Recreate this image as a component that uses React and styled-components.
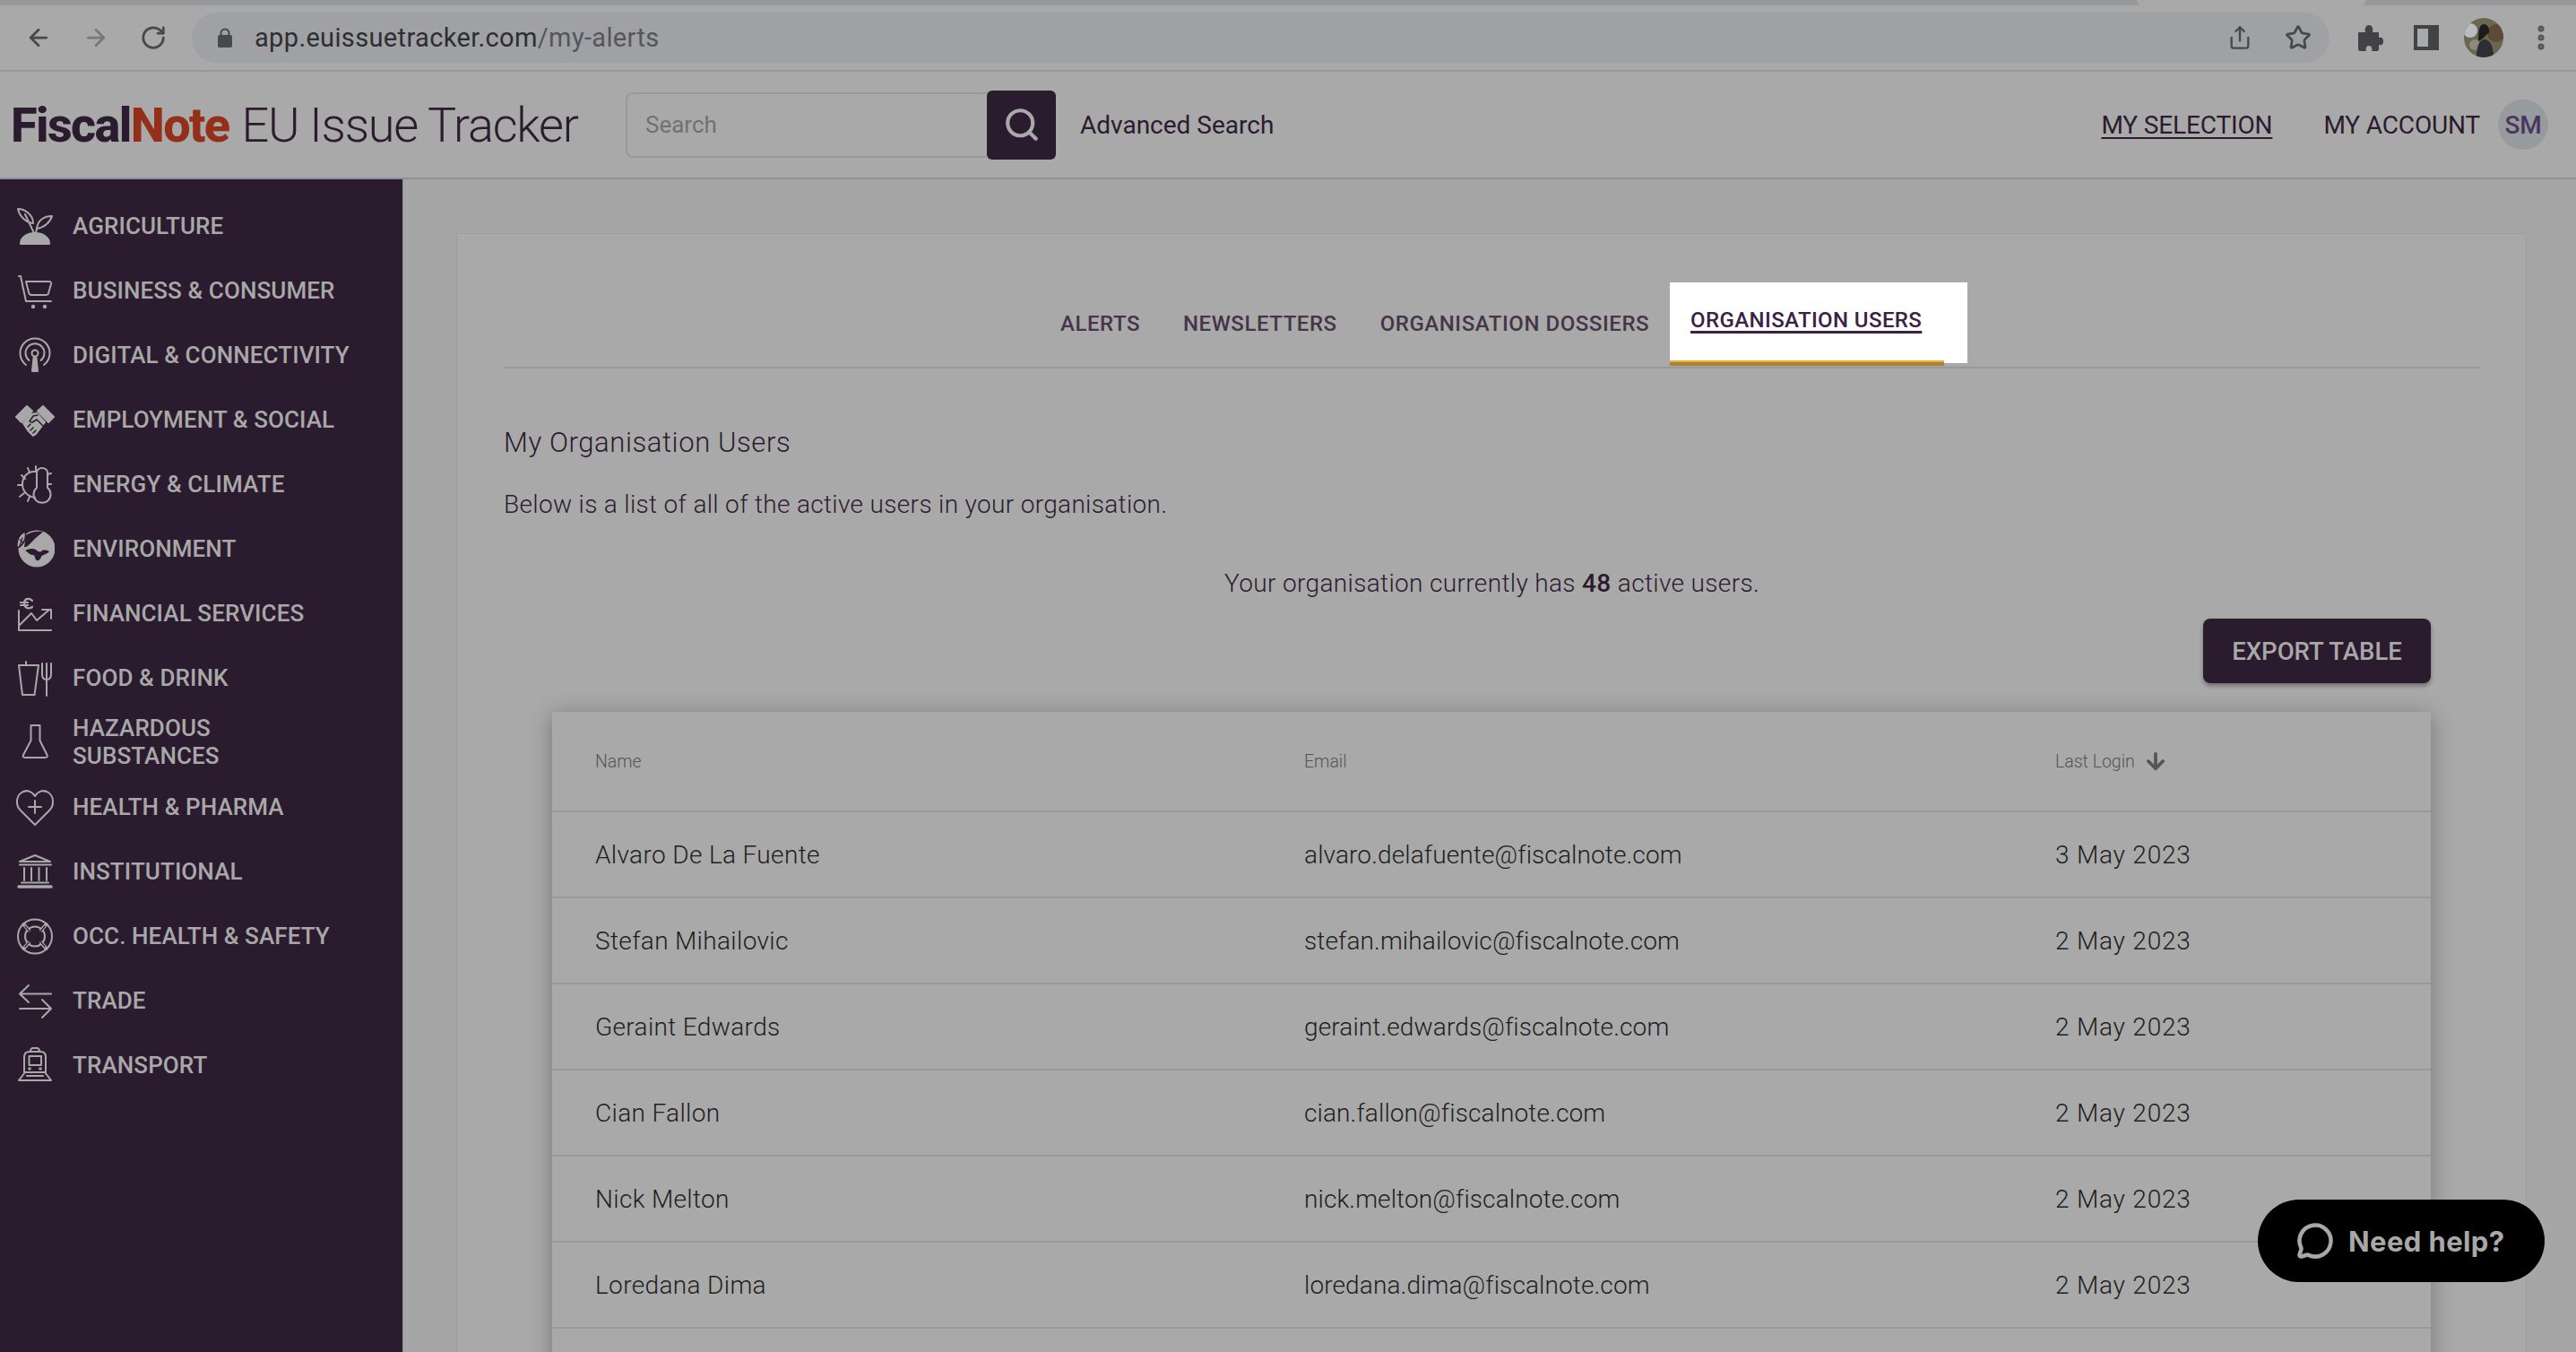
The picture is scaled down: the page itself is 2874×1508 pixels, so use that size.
import React from "react";
import styled, { createGlobalStyle } from "styled-components";
import { Search, Share, Star, ArrowDown, ArrowLeft, ArrowRight, RotateCw, EllipsisVertical, MessageCircle } from "lucide-react";

const Global = createGlobalStyle`
  html, body { margin: 0; padding: 0; height: 100%; overflow: hidden; background: #a9a9a9; }
  body { font-family: Roboto, "Liberation Sans", sans-serif; }
  #root { height: 100%; }
  * { box-sizing: border-box; }
`;

const Page = styled.div`
  height: 1508px; width: 2874px; display: flex; flex-direction: column; overflow: hidden; position: relative;
`;

const Chrome = styled.div`
  height: 80px; flex: none; background: #a9a9a9; border-bottom: 2px solid #9a9a9a; position: relative;
  padding: 6px 0 0 0; display: flex; align-items: center;
`;
const TabStrip = styled.div`
  height: 6px; position: absolute; top: 0; left: 0; right: 0; background: #98999d;
`;
const ChromeTab = styled.div`
  position: absolute; top: 0; left: 2384px; width: 255px; height: 6px; background: #a9a9a9; border-radius: 0 0 8px 8px;
`;
const NavIcons = styled.div`
  display: flex; align-items: center; gap: 34px; padding-left: 28px; width: 214px; flex: none; color: #47484b;
`;
const NavIcon = styled.span`
  display: flex; color: ${p => p.$dim ? "#77787a" : "#47484b"};
`;
const UrlPill = styled.div`
  width: 2385px; height: 56px; border-radius: 28px; background: #a0a1a4; display: flex; align-items: center; padding-left: 28px; flex: none;
`;
const LockGlyph = styled.svg`
  width: 18px; height: 22px; margin-right: 24px; flex: none; display: block;
`;
const UrlText = styled.span`
  font-size: 29px; color: #2d2e30; white-space: nowrap; letter-spacing: 0.35px;
  & > i { font-style: normal; color: #55565a; }
`;
const PillEnd = styled.div`
  margin-left: auto; display: flex; align-items: center; gap: 36px; padding-right: 20px; color: #47484b;
`;
const ChromeRight = styled.div`
  display: flex; align-items: center; margin-left: 30px; color: #414245;
`;
const PuzzleGlyph = styled.svg`
  width: 30px; height: 30px; display: block; fill: #414245;
`;
const SidePanelIcon = styled.span`
  width: 28px; height: 28px; margin-left: 34px; border: 4px solid #414245; border-right-width: 12px; display: block; background: #a9a9a9;
`;
const Avatar = styled.svg`
  width: 44px; height: 44px; margin-left: 28px; border-radius: 50%; display: block;
`;
const Dots = styled.span`
  display: flex; margin-left: 25px; color: #55565a;
`;

const Header = styled.header`
  height: 120px; flex: none; background: #a9a9a9; border-bottom: 2px solid #8f8f9a; display: flex; align-items: center;
  padding: 0 31px 0 12px; color: #2b1b2e;
`;
const Logo = styled.div`
  display: flex; align-items: baseline; width: 686px; flex: none; font-size: 54px; white-space: nowrap;
`;
const LogoBold = styled.span`
  font-weight: 800; letter-spacing: -1.6px; color: ${p => p.$red ? "#94301a" : "#2b1b2e"};
`;
const LogoLight = styled.span`
  font-weight: 300; margin-left: 14px; letter-spacing: -1.2px; color: #2b1b2e;
`;
const SearchBox = styled.div`
  width: 403px; height: 73px; border: 2px solid #999; border-radius: 8px 0 0 8px; border-right: none; padding-left: 20px; display: flex; align-items: center;
  font-size: 26px; color: #717171; flex: none;
`;
const SearchButton = styled.button`
  width: 77px; height: 77px; flex: none; background: #2b1b2e; border: none; border-radius: 6px; color: #a9a9a9; display: flex; align-items: center; justify-content: center; padding: 0;
`;
const AdvLink = styled.span`
  font-size: 28px; margin-left: 27px;
`;
const HeaderRight = styled.div`
  margin-left: auto; display: flex; align-items: center; font-size: 28px; letter-spacing: -0.15px;
`;
const Selection = styled.span`
  text-decoration: underline; text-underline-offset: 4px; text-decoration-thickness: 2px;
`;
const Account = styled.span`
  margin-left: 57px;
`;
const Initials = styled.span`
  width: 56px; height: 56px; border-radius: 50%; background: #969b9e; color: #4b3660; margin-left: 20px; display: flex; align-items: center; justify-content: center; font-size: 28px; font-weight: 500;
`;

const Body = styled.div`
  flex: 1; display: flex; min-height: 0;
`;
const Sidebar = styled.nav`
  width: 450px; flex: none; background: #2b1b2e; border-right: 1px solid #8f8f9a; padding-top: 16px;
`;
const NavRow = styled.div`
  height: 72px; display: flex; align-items: center; color: #a8a8a8;
`;
const NavGlyph = styled.svg`
  width: 44px; height: 44px; margin-left: 17px; flex: none; fill: none; stroke: #a8a8a8; stroke-width: 2; stroke-linecap: round; stroke-linejoin: round;
`;
const NavLabel = styled.span`
  margin-left: 20px; font-size: 26px; line-height: 31px; font-weight: 500; letter-spacing: 0.1px; width: 318px;
`;

const Main = styled.main`
  flex: 1; background: #a6a6a6; padding: 60px 55px 0 59px; min-width: 0; overflow: hidden;
`;
const Card = styled.section`
  background: #a9a9a9; border: 1px solid #9e9e9e; border-bottom: none; height: 1300px; padding: 0 51px 0 52px;
`;
const Tabs = styled.div`
  height: 150px; border-bottom: 2px solid #999; display: flex; padding-left: 621px; align-items: flex-end; position: relative;
`;
const Tab = styled.span`
  font-size: 24px; font-weight: 500; color: #463549; letter-spacing: 0.55px; margin-bottom: 34px; margin-right: ${p => p.$mr}px; white-space: nowrap;
`;
const ActiveTab = styled.div`
  position: absolute; left: 1301px; top: 54px; width: 332px; height: 90px; background: #fff; padding: 28px 0 0 23px;
  font-size: 24px; font-weight: 500; letter-spacing: 0.4px; color: #3a2244;
  &::after { content: ""; position: absolute; left: 0; top: 87px; width: 306px; height: 6px; background: linear-gradient(#e8b23a 0 2px, #ac8431 2px); }
  & > u { text-underline-offset: 4px; text-decoration-thickness: 3px; }
`;
const Heading = styled.h2`
  font-size: 31px; font-weight: 300; margin: 61px 0 0; line-height: 44px; color: #2b1b2e; letter-spacing: 0.6px;
`;
const Lead = styled.p`
  font-size: 28px; font-weight: 300; margin: 27px 0 0; line-height: 40px; color: #2b1b2e; letter-spacing: 0.33px;
`;
const Count = styled.p`
  font-size: 28px; font-weight: 300; margin: 48px 0 0; line-height: 40px; text-align: center; color: #2b1b2e; letter-spacing: 0.35px;
  & > b { font-weight: 500; }
`;
const ExportRow = styled.div`
  display: flex; justify-content: flex-end; padding-right: 55px; margin-top: 19px;
`;
const ExportButton = styled.button`
  width: 254px; height: 72px; background: #2b1b2e; color: #a8a8a8; border: none; border-radius: 8px; font: 500 27.5px Roboto, sans-serif; box-shadow: 0 3px 5px rgba(0,0,0,.35); padding: 0;
`;
const Table = styled.div`
  margin: 32px 55px 0 54px; box-shadow: 0 4px 24px rgba(0,0,0,.3); background: #a9a9a9;
`;
const Row = styled.div`
  display: grid; grid-template-columns: 791px 838px 1fr; padding-left: 48px; height: ${p => p.$h}px; align-items: center; border-bottom: 2px solid #999;
  font-size: ${p => p.$head ? 19.5 : 28}px; font-weight: 300; color: ${p => p.$head ? "#555" : "#1e1e1e"}; letter-spacing: ${p => p.$head ? 0 : 0.35}px;
`;
const EmailCell = styled.span`
  letter-spacing: 0.12px;
`;
const DateCell = styled.span`
  letter-spacing: 0.8px;
`;
const SortCell = styled.span`
  display: flex; align-items: center; gap: 9px;
`;

const Help = styled.div`
  position: absolute; left: 2519px; top: 1338px; width: 320px; height: 92px; border-radius: 46px; background: #000; color: #a8a8a8;
  display: flex; align-items: center; padding-left: 43px; gap: 16px; font: 700 31px Inter, sans-serif; letter-spacing: .4px;
`;

const C = "#a8a8a8";
const D = "#2b1b2e";
const glyphs = [
  <><path d="M3 3C10 3 20 9 20 19 12 18 5 12 3 3z"/><path d="M41 11C33 11 25 15 24 25 32 24 39 18 41 11z"/><path d="M11 9l10 21M24 25l-1 5"/><path d="M6 42C6 34 14 30 22 30 30 30 38 34 38 42z" fill={C}/></>,
  <><path d="M4 6h2l6 28h28"/><path d="M12 12h26c2 0 2 1 2 3l-3 10c-.5 2-1 2-3 2H18c-2 0-2.500-1-3-3z"/><circle cx="20" cy="40" r="1.200" fill={C}/><circle cx="33" cy="40" r="1.200" fill={C}/></>,
  <><path d="M12 33a16.500 16.500 0 1 1 20 0"/><path d="M15.500 28a10.500 10.500 0 1 1 13 0"/><circle cx="22" cy="20" r="3.500"/><path d="M20.500 25L19 40h6L23.500 25z" fill={C}/></>,
  <><path d="M1 19L13 7l6 5.500L7 25z" fill={C}/><path d="M43 19L31 7l-6 5.500L37 25z" fill={C}/><path d="M9 26L18 16l6-1 9 10-10 13-3 2-6-6z" fill={C}/><path d="M25 17l-5 1-4 6 3 1 5-3 8 8M14 30l3-3M17 34l3-3M20 37l3-3" stroke={D} strokeWidth="1.500"/></>,
  <><path d="M23 8C13 7 8 15 8 22c0 8 6 14 14 15"/><path d="M3 23h5M7 12l4 4M14 4l2 5M23 2v5M5 36l5-4M14 41l2-5M40 10l-4 1M40 22h-4"/><path d="M24 26V9a6 5 0 0 1 12 0v17a9.500 9.500 0 1 1-12 0z"/></>,
  <><circle cx="24" cy="22" r="19.500" fill={C} stroke={C}/><path d="M12 7c5-4 12-5 19-4-4 4-8 6-12 11-3 3-6 7-9 6z" fill={D} stroke="none"/><path d="M11 24c4-2 8-3 12-1 2 2 5 4 7 1 3-1 6 0 8 1-3 4-7 3-9 6-1 3-3 5-5 4-3-2-1-5-4-6-3 0-5-2-9-5z" fill={D} stroke="none"/><path d="M11 3C5 5 1 12 2 21c7-2 11-11 9-18z" fill={C} stroke={D} strokeWidth="1.500"/><path d="M8 10l-3 9M7 13l-2-1M6.500 15l3-1" stroke={D} strokeWidth="1.200"/></>,
  <><path d="M4 19v22h36M4 36l14-14 6 8 14-12"/><path d="M30 18h10v10"/><path d="M19 8c-4-4-9-2-9 3s5 7 9 4M6 10h8M6 13h8" strokeWidth="2.200"/></>,
  <><path d="M4 8h22l-4.500 33H8z"/><path d="M12 8V4"/><path d="M30 6v12c0 4 2 6 5 6s5-2 5-6V6M35 6v36"/></>,
  <><path d="M17.500 3h10v17l8 16c1 2 0 3-2 3H11c-2 0-3-1-2-3l8.500-16z"/></>,
  <><path d="M22 42L6 26C0 20 1 10 7 6 13 2 19 5 22 10 25 5 31 2 37 6 43 10 44 20 38 26z"/><path d="M22 15v14M15 22h14"/></>,
  <><path d="M5 11L22 4l17 7z"/><path d="M5 14.500h35M10 18v14M18 18v14M26.500 18v14M35 18v14M7 34.500h30"/><path d="M4 39h36" strokeWidth="3.500"/></>,
  <><circle cx="22" cy="22.500" r="19"/><circle cx="22" cy="22.500" r="11"/><path d="M9.500 9l5.500 6.500M34.500 9L29 15.500M9.500 36l5.500-6.500M34.500 36L29 29.500" strokeWidth="4" stroke={C}/><path d="M11 11l5 6M33 11l-5 6M11 34l5-6M33 34l-5-6" stroke={D} strokeWidth="1.200"/></>,
  <><path d="M40 14.500H5M15 5L5 14.500 15 24M5 31h35M30 21l10 10-10 10"/></>,
  <><path d="M10 30V13c0-4 2-6 6-6h12c4 0 6 2 6 6v17z"/><path d="M17 7c0-3 1-4 3-4h4c2 0 3 1 3 4"/><path d="M15.500 12h13.500v10H15.500z"/><path d="M13 34h18M4 39l7-9h22l7 9z"/><circle cx="16" cy="26" r=".8" fill={C}/><circle cx="28" cy="26" r=".8" fill={C}/></>,
];
const names = ["AGRICULTURE","BUSINESS & CONSUMER","DIGITAL & CONNECTIVITY","EMPLOYMENT & SOCIAL","ENERGY & CLIMATE","ENVIRONMENT","FINANCIAL SERVICES","FOOD & DRINK","HAZARDOUS SUBSTANCES","HEALTH & PHARMA","INSTITUTIONAL","OCC. HEALTH & SAFETY","TRADE","TRANSPORT"];
const users = [
  ["Alvaro De La Fuente","alvaro.delafuente@fiscalnote.com","3 May 2023"],
  ["Stefan Mihailovic","stefan.mihailovic@fiscalnote.com","2 May 2023"],
  ["Geraint Edwards","geraint.edwards@fiscalnote.com","2 May 2023"],
  ["Cian Fallon","cian.fallon@fiscalnote.com","2 May 2023"],
  ["Nick Melton","nick.melton@fiscalnote.com","2 May 2023"],
  ["Loredana Dima","loredana.dima@fiscalnote.com","2 May 2023"],
];

export default function App() {
  return (
    <Page>
      <Global />
      <Chrome>
        <TabStrip /><ChromeTab />
        <NavIcons>
          <NavIcon><ArrowLeft size={30} strokeWidth={2.2} /></NavIcon>
          <NavIcon $dim><ArrowRight size={30} strokeWidth={2.2} /></NavIcon>
          <NavIcon><RotateCw size={30} strokeWidth={2.2} /></NavIcon>
        </NavIcons>
        <UrlPill>
          <LockGlyph viewBox="0 0 18 22"><path d="M4.500 9V6a4.500 4.500 0 0 1 9 0v3" fill="none" stroke="#47484b" strokeWidth="2"/><rect x="1" y="8" width="16" height="14" rx="2" fill="#47484b"/></LockGlyph>
          <UrlText>app.euissuetracker.com<i>/my-alerts</i></UrlText>
          <PillEnd><Share size={28} strokeWidth={2} /><Star size={30} strokeWidth={2.2} /></PillEnd>
        </UrlPill>
        <ChromeRight>
          <PuzzleGlyph viewBox="0 0 30 30"><path d="M2 9h8c-1-3 0-8 4-8s5 5 4 8h7v6c3-1 5 0 5 4s-2 5-5 4v5c0 1-1 2-2 2h-6c1-3 0-6-3-6s-4 3-3 6H4c-1 0-2-1-2-2z"/></PuzzleGlyph>
          <SidePanelIcon />
          <Avatar viewBox="0 0 44 44"><rect width="44" height="44" fill="#6b6650"/><circle cx="7" cy="14" r="8" fill="#b9bdc0"/><circle cx="36" cy="17" r="10" fill="#5a4a36"/><circle cx="12" cy="30" r="6" fill="#8c8a7d"/><path d="M14 44c0-14 4-20 9-20s10 6 10 20z" fill="#2b2e33"/><path d="M16 26c0-14 2-19 6-19s7 4 6 10c-3 0-4 5-12 9z" fill="#1d1a1a"/></Avatar>
          <Dots><EllipsisVertical size={34} strokeWidth={3} /></Dots>
        </ChromeRight>
      </Chrome>
      <Header>
        <Logo>
          <LogoBold>Fiscal</LogoBold><LogoBold $red>Note</LogoBold><LogoLight>EU Issue Tracker</LogoLight>
        </Logo>
        <SearchBox>Search</SearchBox>
        <SearchButton><Search size={42} strokeWidth={2.4} /></SearchButton>
        <AdvLink>Advanced Search</AdvLink>
        <HeaderRight>
          <Selection>MY SELECTION</Selection>
          <Account>MY ACCOUNT</Account>
          <Initials>SM</Initials>
        </HeaderRight>
      </Header>
      <Body>
        <Sidebar>
          {names.map((n, i) => (
            <NavRow key={n}>
              <NavGlyph viewBox="0 0 44 44">{glyphs[i]}</NavGlyph>
              <NavLabel>{n}</NavLabel>
            </NavRow>
          ))}
        </Sidebar>
        <Main>
          <Card>
            <Tabs>
              <Tab $mr={48}>ALERTS</Tab>
              <Tab $mr={48}>NEWSLETTERS</Tab>
              <Tab $mr={0}>ORGANISATION DOSSIERS</Tab>
              <ActiveTab><u>ORGANISATION USERS</u></ActiveTab>
            </Tabs>
            <Heading>My Organisation Users</Heading>
            <Lead>Below is a list of all of the active users in your organisation.</Lead>
            <Count>Your organisation currently has <b>48</b> active users.</Count>
            <ExportRow><ExportButton>EXPORT TABLE</ExportButton></ExportRow>
            <Table>
              <Row $head $h={112}>
                <span>Name</span><span>Email</span>
                <SortCell>Last Login <ArrowDown size={28} strokeWidth={3.2} color="#555" /></SortCell>
              </Row>
              {users.map(u => (
                <Row key={u[0]} $h={96}><span>{u[0]}</span><EmailCell>{u[1]}</EmailCell><DateCell>{u[2]}</DateCell></Row>
              ))}
              <Row $h={96} />
            </Table>
          </Card>
        </Main>
      </Body>
      <Help><MessageCircle size={42} strokeWidth={2.6} />Need help?</Help>
    </Page>
  );
}
